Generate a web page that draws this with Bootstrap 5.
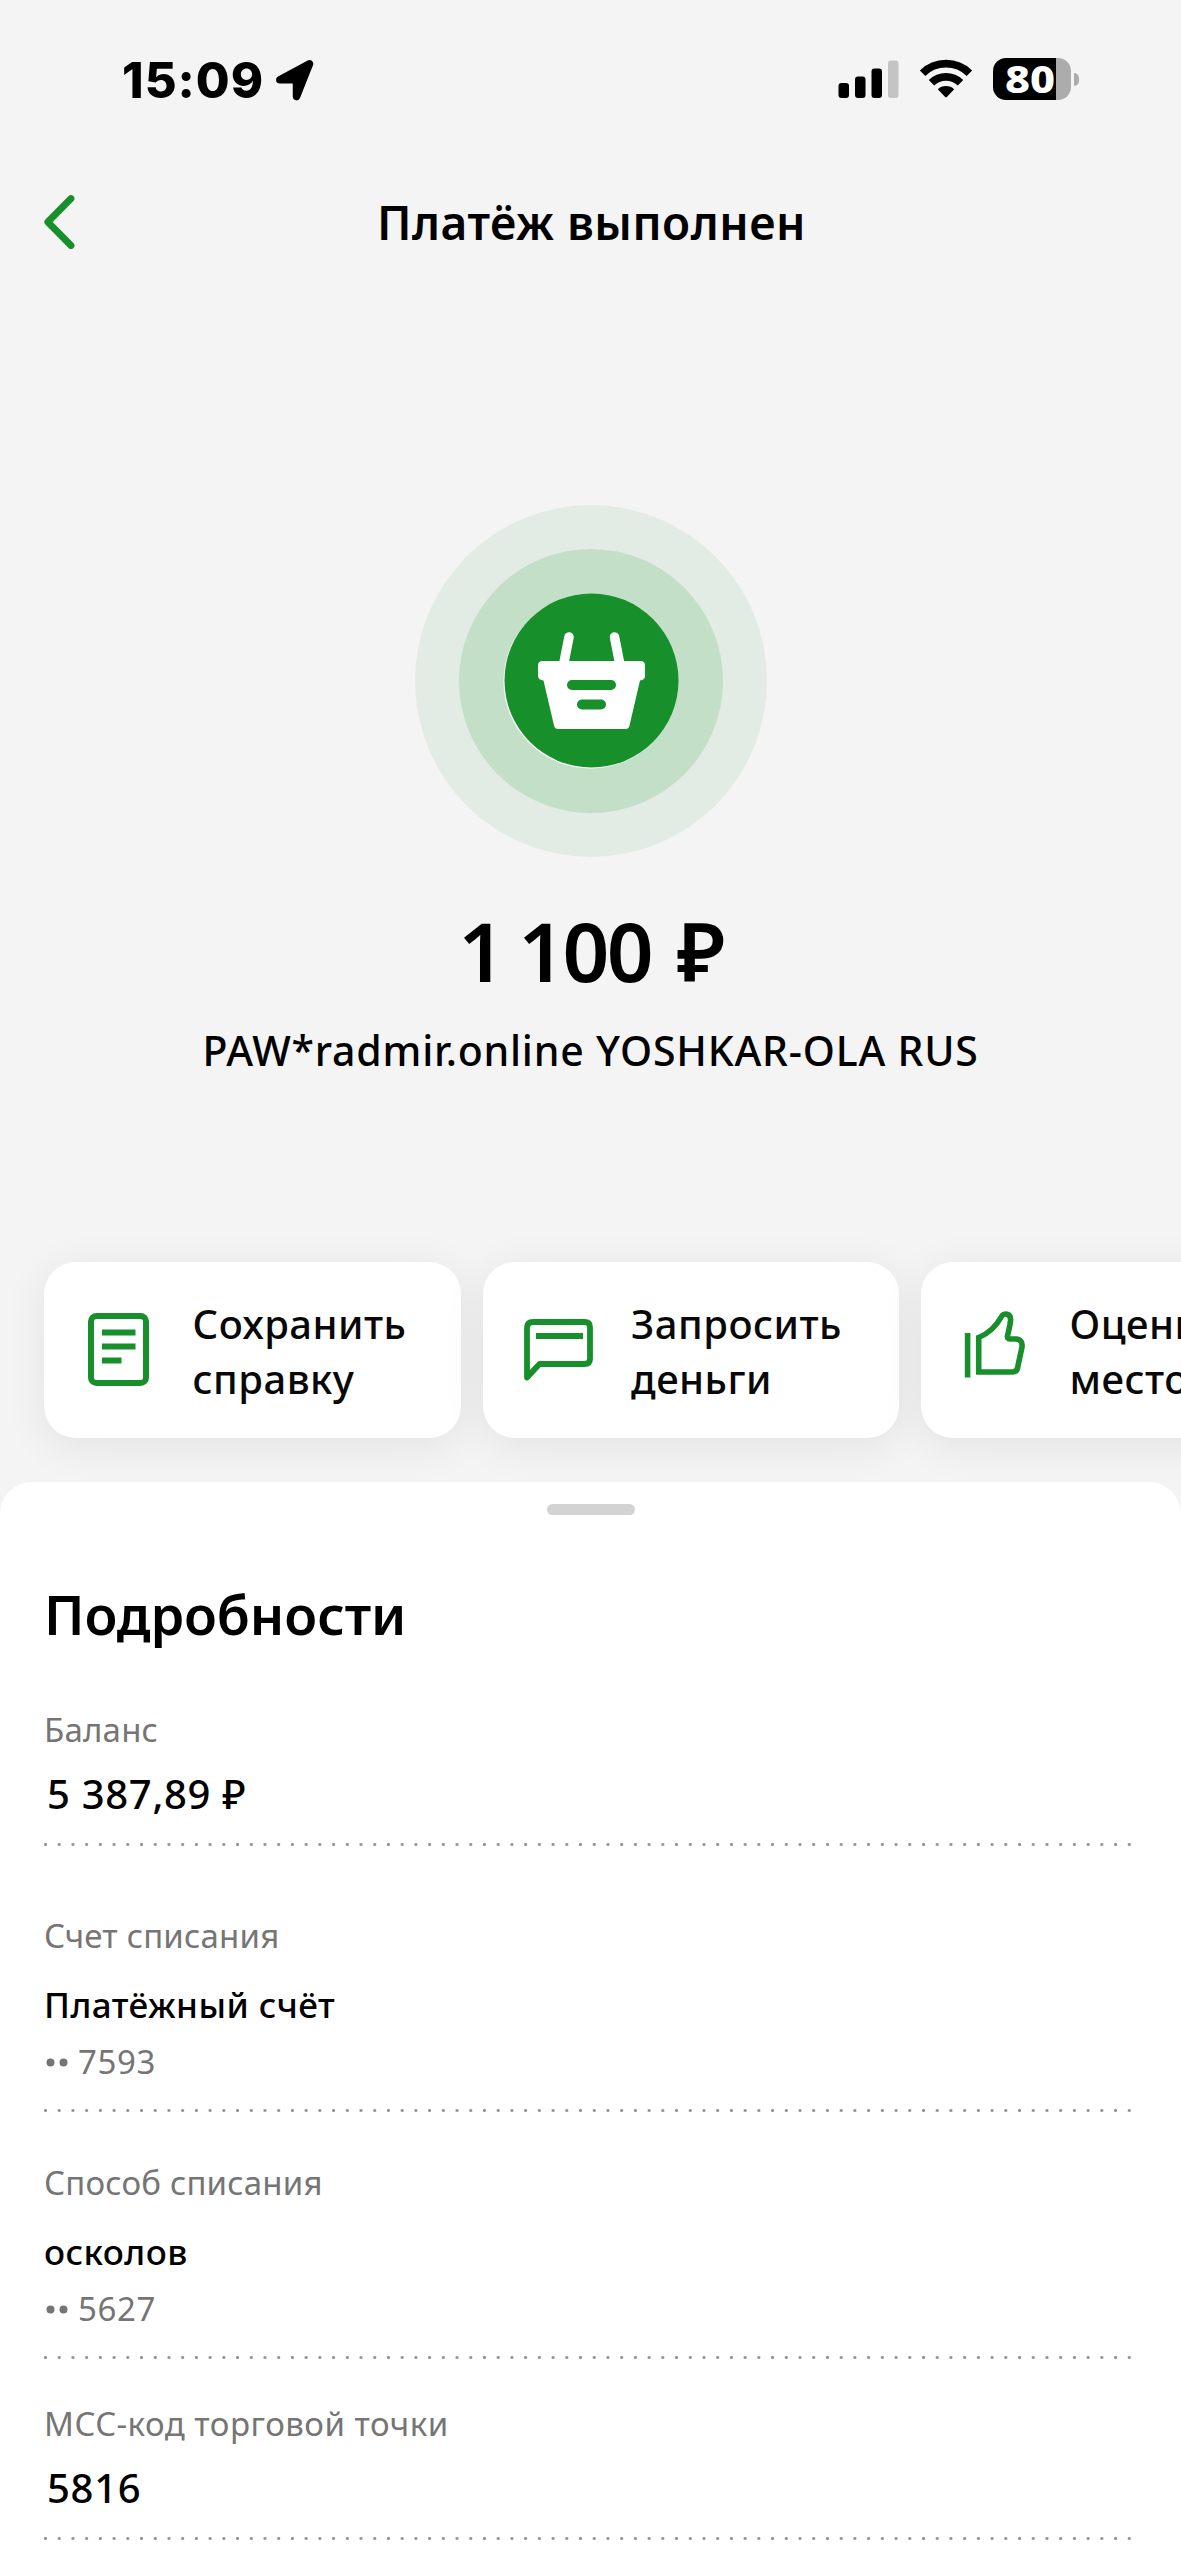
<!DOCTYPE html>
<html lang="ru">
<head>
<meta charset="utf-8">
<meta name="viewport" content="width=device-width, initial-scale=1">
<title>Платёж выполнен</title>
<link href="https://cdn.jsdelivr.net/npm/bootstrap@5.3.0/dist/css/bootstrap.min.css" rel="stylesheet">
<style>
  :root { --brand: #178f2b; }
  body { background: #f4f4f4; color: #000; font-family: "Noto Sans", "Open Sans", sans-serif; }
  svg { display: block; flex: none; }
  .screen { height: 2560px; }
  .status-bar { height: 158px; padding: 0 102px 0 122px; }
  .clock { font: 800 49px/60px Inter, sans-serif; letter-spacing: 1px; padding-top: 3px; min-width: 142px; }
  .status-icons { gap: 20px; }
  .battery { width: 78px; height: 42px; border-radius: 13px; background: linear-gradient(90deg, #000 63px, #acacac 63px); color: #fff; font-size: 38px; line-height: 40px; font-weight: 800; }
  .battery-level { display: block; padding-left: 12px; transform: scaleX(1.14); transform-origin: 12px 0; }
  .battery-tip { width: 5px; height: 13px; margin-left: 3px; border-radius: 0 5px 5px 0; background: #acacac; }
  .app-bar { height: 128px; padding: 0 41px; }
  .app-title { font-size: 46px; font-weight: 600; line-height: 64px; letter-spacing: .52px; padding-left: 2px; }
  .hero { padding-top: 219px; }
  .amount { font-size: 82px; font-weight: 600; line-height: 100px; margin-top: 43px; letter-spacing: -2.6px; word-spacing: -3px; }
  .amount span { margin-left: 10px; }
  .merchant { font-size: 41px; font-weight: 500; line-height: 60px; margin-top: 20px; letter-spacing: .8px; }
  .actions { margin-top: 181.5px; padding-left: 44px; gap: 22px; }
  .action { width: 416.5px; height: 176px; border-radius: 32px; background: #fff; box-shadow: 0 8px 44px rgba(0, 0, 0, .075); padding-left: 38px; font-size: 40px; font-weight: 500; line-height: 55px; letter-spacing: .5px; color: #080808; }
  .action svg { margin-right: 38.5px; }
  .action span { padding-top: 2px; }
  .sheet { margin-top: 44px; border-radius: 32px 32px 0 0; background: #fff; padding: 22px 44px 0; height: 1079px; }
  .handle { width: 88px; height: 11px; border-radius: 6px; background: #d3d3d3; }
  .sheet-title { font-size: 54px; font-weight: 600; line-height: 70px; margin-top: 64.5px; letter-spacing: -.14px; }
  .field-label, .field-note { font-size: 33px; font-weight: 430; line-height: 44px; color: #757575; letter-spacing: .2px; }
  .field-value { font-size: 40px; font-weight: 500; line-height: 56px; padding-left: 3px; margin-top: 13.5px; letter-spacing: .7px; }
  .field-name { font-size: 35px; font-weight: 500; line-height: 48px; margin-top: 23px; letter-spacing: .45px; }
  .field-note { margin-top: 11px; gap: 9px; letter-spacing: .6px; }
  .dots-rule { width: 1090px; height: 3px; margin-top: 21.5px; background: radial-gradient(circle at 1.5px 1.5px, #909090 1.1px, transparent 1.9px) 0 0 / 13.72px 3px repeat-x; }
  .field-note + .dots-rule { margin-top: 25.5px; }
</style>
</head>
<body>
<main class="screen overflow-hidden">
  <div class="status-bar d-flex align-items-center justify-content-between">
    <div class="d-flex align-items-center">
      <span class="clock">15:09</span>
      <svg width="44" height="44" viewBox="0 0 44 44" class="ms-2" style="margin-top:4px"><path d="M37.500 4.800 24.500 37.500V20.800H7.800Z" stroke="#000" stroke-width="7.500" stroke-linejoin="round"/></svg>
    </div>
    <div class="status-icons d-flex align-items-center">
      <svg width="61" height="40" viewBox="0 0 61 40"><rect x="0.500" y="24" width="10.500" height="15" rx="3"/><rect x="17" y="17.500" width="10.500" height="21.500" rx="3"/><rect x="33.500" y="9.500" width="10.500" height="29.500" rx="3"/><rect x="50" y="1.500" width="10.500" height="37.500" rx="3" fill="#c4c4c4"/></svg>
      <svg width="54" height="40" viewBox="0 0 54 40"><g fill="none" stroke="#000" stroke-width="7.800"><path d="M3.600 14.200A33.600 33.600 0 0 1 50.400 14.200"/><path d="M12.500 23.700A20.800 20.800 0 0 1 41.500 23.700"/></g><path d="M18.800 30.300A12 12 0 0 1 35.200 30.300L27.800 38Q27 38.800 26.200 38Z"/></svg>
      <div class="d-flex align-items-center">
        <div class="battery"><span class="battery-level">80</span></div>
        <div class="battery-tip"></div>
      </div>
    </div>
  </div>

  <header class="app-bar d-flex align-items-center justify-content-between">
    <svg width="38" height="56" viewBox="0 0 38 56" fill="none" stroke="var(--brand)" stroke-width="6.800" stroke-linecap="round" stroke-linejoin="round"><path d="M30 4.500 6.800 28 30 51.500"/></svg>
    <h1 class="app-title m-0">Платёж выполнен</h1>
    <span style="width:38px"></span>
  </header>

  <section class="hero d-flex flex-column align-items-center">
    <svg width="352" height="352" viewBox="0 0 352 352">
      <circle cx="176" cy="176" r="176" fill="#e3ece4"/>
      <circle cx="176" cy="176" r="132" fill="#c3dfc8"/>
      <circle cx="175.500" cy="176.500" r="87" fill="#fff"/>
      <circle cx="176.500" cy="175.500" r="87" fill="var(--brand)"/>
      <g stroke="#fff" stroke-width="9.500" stroke-linecap="round"><path d="M154 132 148.500 160M199.500 132 205 160"/></g>
      <path d="M127.500 156H225.500Q230 156 230 160.500V170.500Q230 175 225 175.500L214.500 220.500Q213.700 224 210.500 224H143Q139.800 224 139 220.500L128.500 175.500Q123 175 123 170.500V160.500Q123 156 127.500 156Z" fill="#fff"/>
      <path d="M157 180H196M167 199.500H186" stroke="var(--brand)" stroke-width="10" stroke-linecap="round"/>
    </svg>
    <div class="amount">1 100 <span>₽</span></div>
    <div class="merchant">PAW*radmir.online YOSHKAR-OLA RUS</div>
  </section>

  <div class="actions d-flex">
    <div class="action d-flex align-items-center flex-shrink-0">
      <svg width="72" height="88" viewBox="0 0 72 88" fill="none" stroke="var(--brand)" stroke-width="6"><rect x="9" y="10" width="55" height="67" rx="5.500"/><path d="M20 26.500H53.500M20 40.500H53.500M20 54.500H39.500"/></svg>
      <span>Сохранить<br>справку</span>
    </div>
    <div class="action d-flex align-items-center flex-shrink-0">
      <svg width="72" height="88" viewBox="0 0 72 88" fill="none" stroke="var(--brand)" stroke-width="5.800" stroke-linejoin="round"><path d="M12 16H63.500Q69 16 69 21V53Q69 58 63.500 58H18.500L6 71.500V22Q6 16 12 16Z"/><path d="M15 30H62"/></svg>
      <span>Запросить<br>деньги</span>
    </div>
    <div class="action d-flex align-items-center flex-shrink-0">
      <svg width="72" height="88" viewBox="0 0 72 88" fill="none" stroke="var(--brand)" stroke-width="5.600"><path d="M8.600 27V71.500"/><path d="M19.700 66V31.500C31 27 37 20.500 42.500 10.500C44.500 6.500 52.500 7 51.500 15C51 20.500 49.500 25 48.500 30Q48 33 51 33H57Q63.800 33.500 63 41L58.500 62Q57.500 66 53.500 66Z"/></svg>
      <span>Оценить<br>место</span>
    </div>
  </div>

  <section class="sheet">
    <div class="handle mx-auto"></div>
    <h2 class="sheet-title mb-0">Подробности</h2>

    <div style="margin-top:59px">
      <div class="field-label">Баланс</div>
      <div class="field-value">5 387,89 ₽</div>
      <div class="dots-rule"></div>
    </div>
    <div style="margin-top:67.500px">
      <div class="field-label">Счет списания</div>
      <div class="field-name">Платёжный счёт</div>
      <div class="field-note d-flex align-items-center"><svg width="25" height="10" viewBox="0 0 25 10" fill="#757575"><circle cx="6.500" cy="5.500" r="4"/><circle cx="19.500" cy="5.500" r="4"/></svg><span>7593</span></div>
      <div class="dots-rule"></div>
    </div>
    <div style="margin-top:48.500px">
      <div class="field-label">Способ списания</div>
      <div class="field-name">осколов</div>
      <div class="field-note d-flex align-items-center"><svg width="25" height="10" viewBox="0 0 25 10" fill="#757575"><circle cx="6.500" cy="5.500" r="4"/><circle cx="19.500" cy="5.500" r="4"/></svg><span>5627</span></div>
      <div class="dots-rule"></div>
    </div>
    <div style="margin-top:43px">
      <div class="field-label" style="letter-spacing:.5px">MCC-код торговой точки</div>
      <div class="field-value">5816</div>
      <div class="dots-rule"></div>
    </div>
  </section>
</main>
<script src="https://cdn.jsdelivr.net/npm/bootstrap@5.3.0/dist/js/bootstrap.bundle.min.js"></script>
</body>
</html>
